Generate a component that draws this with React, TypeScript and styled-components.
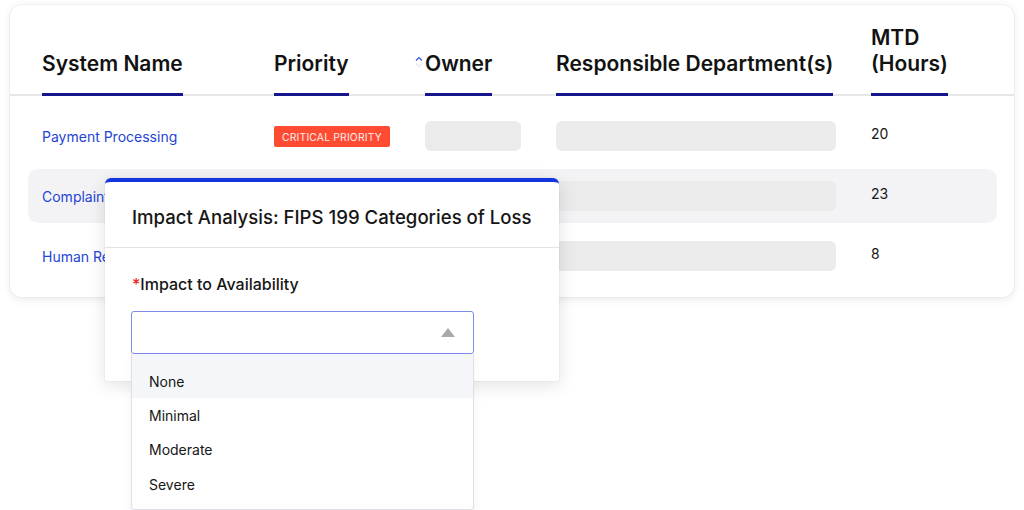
import React from "react";
import styled, { createGlobalStyle } from "styled-components";

const GlobalStyle = createGlobalStyle`
  html, body { margin: 0; padding: 0; background: #ffffff; }
  body { font-family: Inter, "Noto Sans", "Liberation Sans", sans-serif; color: #161616; }
  * { box-sizing: border-box; }
`;

const Page = styled.div`
  position: relative;
  width: 1024px;
  height: 510px;
  overflow: hidden;
  padding: 5px 10px 0 10px;
`;

const Card = styled.div`
  background: #ffffff;
  border-radius: 12px;
  box-shadow: 0 2px 10px rgba(20, 20, 40, 0.09), 0 0 0 1px rgba(20, 20, 40, 0.03);
`;

const COLS = "232px 151px 131px 315px 1fr";

const HeaderBar = styled.div`
  padding: 20px 31px 0 32px;
  border-bottom: 2px solid #e7e7ea;
`;

const HeaderGrid = styled.div`
  display: grid;
  grid-template-columns: ${COLS};
  align-items: end;
`;

const HeaderCell = styled.div`
  display: flex;
  align-items: flex-end;
`;

const HeaderLabel = styled.span`
  position: relative;
  display: inline-block;
  font-size: 21px;
  line-height: 26px;
  font-weight: 600;
  color: #121212;
  padding-bottom: 16px;
  margin-bottom: -2px;
  border-bottom: 3px solid #15158c;
  white-space: nowrap;
`;

const SortIcon = styled.svg`
  position: absolute;
  left: -10px;
  top: 5px;
`;

const Body = styled.div`
  display: flex;
  flex-direction: column;
  gap: 6px;
  padding: 13px 17px 14px 18px;
`;

const Row = styled.div<{ $shaded?: boolean }>`
  display: grid;
  grid-template-columns: ${COLS};
  align-items: center;
  height: 54px;
  padding: 0 14px;
  border-radius: 10px;
  background: ${(p) => (p.$shaded ? "#f3f3f5" : "transparent")};
`;

const NameLink = styled.a`
  font-size: 14px;
  color: #2444d6;
  text-decoration: none;
  white-space: nowrap;
`;

const Badge = styled.span`
  display: inline-flex;
  align-items: center;
  justify-content: center;
  width: 116px;
  height: 21px;
  background: #ff4b32;
  color: #ffeeea;
  font-size: 10.3px;
  letter-spacing: 0.2px;
  border-radius: 2px;
`;

const Placeholder = styled.div<{ $w: number }>`
  width: ${(p) => p.$w}px;
  height: 30px;
  border-radius: 6px;
  background: #ebebec;
`;

const Hours = styled.span`
  font-size: 14px;
  color: #161616;
  padding-bottom: 6px;
`;

const Modal = styled.div`
  position: absolute;
  left: 105px;
  top: 178px;
  width: 454px;
  background: #ffffff;
  border-top: 4px solid #1335df;
  border-radius: 6px 6px 2px 2px;
  box-shadow: 0 4px 18px rgba(20, 20, 40, 0.12), 0 0 0 1px rgba(20, 20, 40, 0.03);
`;

const ModalHeader = styled.div`
  height: 66px;
  display: flex;
  align-items: center;
  padding: 4px 20px 0 27px;
  border-bottom: 1px solid #e3e3e6;
`;

const ModalTitle = styled.h2`
  margin: 0;
  font-size: 18.6px;
  font-weight: 500;
  color: #161616;
  white-space: nowrap;
`;

const ModalBody = styled.div`
  padding: 26px 27px 27px 26px;
`;

const FieldLabel = styled.div`
  font-size: 16px;
  line-height: 20px;
  font-weight: 500;
  color: #161616;
  margin-bottom: 17px;
  padding-left: 1px;
`;

const Required = styled.span`
  color: #e8262b;
`;

const SelectWrap = styled.div`
  position: relative;
  width: 343px;
`;

const SelectBox = styled.div`
  height: 43px;
  border: 1px solid #7f8aea;
  border-radius: 3px;
  display: flex;
  align-items: center;
  justify-content: flex-end;
  padding-right: 18px;
`;

const Menu = styled.ul`
  position: absolute;
  top: 100%;
  left: 0;
  width: 343px;
  margin: 0;
  padding: 0 0 7px 0;
  list-style: none;
  background: #ffffff;
  border: 1px solid #dfdfe5;
  border-top: none;
  border-radius: 0 0 4px 4px;
  box-shadow: 0 4px 10px rgba(20, 20, 40, 0.05);
`;

const MenuItem = styled.li<{ $active?: boolean }>`
  height: ${(p) => (p.$active ? "44px" : "34.5px")};
  padding: ${(p) => (p.$active ? "10px 17px 0" : "0 17px")};
  display: flex;
  align-items: center;
  font-size: 14px;
  color: #161616;
  background: ${(p) => (p.$active ? "#f5f6fa" : "transparent")};
`;

const rows = [
  { name: "Payment Processing", hours: "20", shaded: false },
  { name: "Complaint Management", hours: "23", shaded: true },
  { name: "Human Resources", hours: "8", shaded: false },
];

export default function App() {
  return (
    <>
      <GlobalStyle />
      <Page>
        <Card>
          <HeaderBar>
            <HeaderGrid>
              <HeaderCell>
                <HeaderLabel>System Name</HeaderLabel>
              </HeaderCell>
              <HeaderCell>
                <HeaderLabel>Priority</HeaderLabel>
              </HeaderCell>
              <HeaderCell>
                <HeaderLabel>
                  <SortIcon width="8" height="12" viewBox="0 0 8 12">
                    <polyline points="1,4.5 4,1.5 7,4.5" fill="none" stroke="#3355dd" strokeWidth="1.2" />
                    <polyline points="1,7.5 4,10.5 7,7.5" fill="none" stroke="#e4e6f0" strokeWidth="1.2" />
                  </SortIcon>
                  Owner
                </HeaderLabel>
              </HeaderCell>
              <HeaderCell>
                <HeaderLabel>Responsible Department(s)</HeaderLabel>
              </HeaderCell>
              <HeaderCell>
                <HeaderLabel>
                  MTD
                  <br />
                  (Hours)
                </HeaderLabel>
              </HeaderCell>
            </HeaderGrid>
          </HeaderBar>
          <Body>
            {rows.map((r) => (
              <Row key={r.name} $shaded={r.shaded}>
                <NameLink href="#">{r.name}</NameLink>
                <div>
                  <Badge>CRITICAL PRIORITY</Badge>
                </div>
                <Placeholder $w={96} />
                <Placeholder $w={280} />
                <Hours>{r.hours}</Hours>
              </Row>
            ))}
          </Body>
        </Card>

        <Modal>
          <ModalHeader>
            <ModalTitle>Impact Analysis: FIPS 199 Categories of Loss</ModalTitle>
          </ModalHeader>
          <ModalBody>
            <FieldLabel>
              <Required>*</Required>Impact to Availability
            </FieldLabel>
            <SelectWrap>
              <SelectBox>
                <svg width="14" height="9" viewBox="0 0 14 9">
                  <polygon points="7,0 14,9 0,9" fill="#a9a9a9" />
                </svg>
              </SelectBox>
              <Menu>
                <MenuItem $active>None</MenuItem>
                <MenuItem>Minimal</MenuItem>
                <MenuItem>Moderate</MenuItem>
                <MenuItem>Severe</MenuItem>
              </Menu>
            </SelectWrap>
          </ModalBody>
        </Modal>
      </Page>
    </>
  );
}
